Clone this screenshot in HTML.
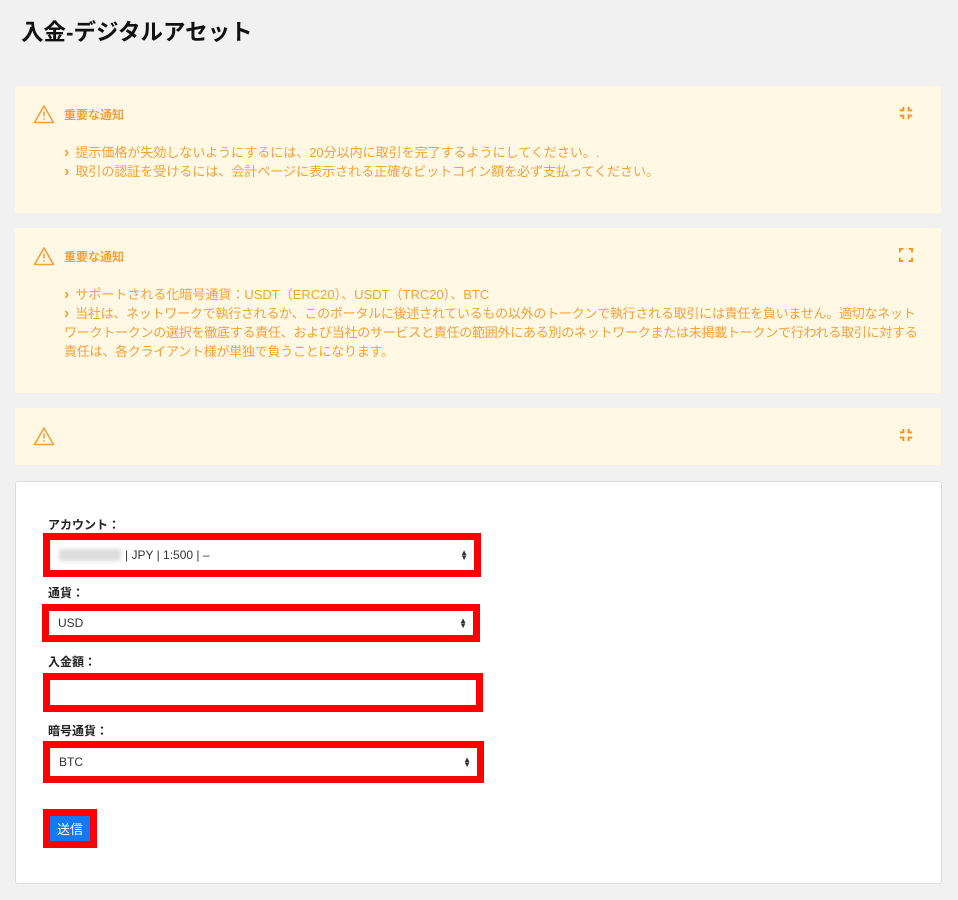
<!DOCTYPE html>
<html><head><meta charset="utf-8">
<style>
*{box-sizing:border-box;margin:0;padding:0}
body{width:958px;height:900px;background:#f1f1f1;font-family:"Liberation Sans","Noto Sans CJK JP",sans-serif;position:relative;overflow:hidden}
h1{position:absolute;left:21px;top:15px;font-size:22.5px;font-weight:bold;color:#111}
.p{position:absolute;left:15px;width:926px;background:#fef8e4;border-radius:2px}
.p .t{position:absolute;left:49px;top:20px;font-size:12px;font-weight:bold;color:#f5a03c}
.p .w{position:absolute;left:18px;top:18px}
.p .c{position:absolute;left:884px;top:20px}
.p ul{position:absolute;left:49px;top:57px;list-style:none;font-size:13px;line-height:19px;color:#f5a03c;width:900px}
.p li:before{content:"›";font-weight:bold;margin-right:6px;font-size:16px;line-height:12px}
.card{position:absolute;left:15px;top:481px;width:927px;height:403px;background:#fff;border:1px solid #ddd;border-radius:3px}
.lb{position:absolute;left:48px;font-size:12px;font-weight:bold;color:#222}
.f{position:absolute;border:7px solid #f00;background:#fff;font-size:12px;color:#333;padding-left:9px;display:flex;align-items:center}
.f .ar{position:absolute;right:6px;top:50%;transform:translateY(-50%);font-size:8px;line-height:5px;color:#333}
.btn{position:absolute;left:43px;top:809px;width:54px;height:39px;border:7px solid #f00;background:#1479f5;color:#fff;font-size:13px;display:flex;align-items:center;justify-content:center}
</style></head><body>
<h1>入金-デジタルアセット</h1>

<div class="p" style="top:86px;height:127px">
<svg class="w" width="22" height="20" viewBox="0 0 22 20"><path d="M11 2 L20.5 18.5 H1.5 Z" fill="none" stroke="#f5a03c" stroke-width="1.6" stroke-linejoin="round"/><path d="M11 7.5v5" stroke="#f5a03c" stroke-width="1.6"/><circle cx="11" cy="15" r="0.9" fill="#f5a03c"/></svg>
<div class="t">重要な通知</div>
<svg class="c" width="14" height="14" viewBox="0 0 16 16" fill="none" stroke="#f7941d" stroke-width="2.2"><path d="M5 1v4H1M11 1v4h4M5 15v-4H1M11 15v-4h4"/></svg>
<ul><li>提示価格が失効しないようにするには、20分以内に取引を完了するようにしてください。.</li><li>取引の認証を受けるには、会計ページに表示される正確なビットコイン額を必ず支払ってください。</li></ul>
</div>

<div class="p" style="top:228px;height:165px">
<svg class="w" width="22" height="20" viewBox="0 0 22 20"><path d="M11 2 L20.5 18.5 H1.5 Z" fill="none" stroke="#f5a03c" stroke-width="1.6" stroke-linejoin="round"/><path d="M11 7.5v5" stroke="#f5a03c" stroke-width="1.6"/><circle cx="11" cy="15" r="0.9" fill="#f5a03c"/></svg>
<div class="t">重要な通知</div>
<svg class="c" width="14" height="14" viewBox="0 0 16 16" fill="none" stroke="#f7941d" stroke-width="2.2"><path d="M1 5V1h4M11 1h4v4M1 11v4h4M15 11v4h-4"/></svg>
<ul><li>サポートされる化暗号通貨：USDT（ERC20）、USDT（TRC20）、BTC</li><li style="letter-spacing:-0.25px">当社は、ネットワークで執行されるか、このポータルに後述されているもの以外のトークンで執行される取引には責任を負いません。適切なネット<br>ワークトークンの選択を徹底する責任、および当社のサービスと責任の範囲外にある別のネットワークまたは未掲載トークンで行われる取引に対する<br>責任は、各クライアント様が単独で負うことになります。</li></ul>
</div>

<div class="p" style="top:408px;height:57px">
<svg class="w" width="22" height="20" viewBox="0 0 22 20"><path d="M11 2 L20.5 18.5 H1.5 Z" fill="none" stroke="#f5a03c" stroke-width="1.6" stroke-linejoin="round"/><path d="M11 7.5v5" stroke="#f5a03c" stroke-width="1.6"/><circle cx="11" cy="15" r="0.9" fill="#f5a03c"/></svg>
<svg class="c" width="14" height="14" viewBox="0 0 16 16" fill="none" stroke="#f7941d" stroke-width="2.2"><path d="M5 1v4H1M11 1v4h4M5 15v-4H1M11 15v-4h4"/></svg>
</div>

<div class="card"></div>
<div class="lb" style="top:516px">アカウント：</div>
<div class="f" style="left:43px;top:533px;width:438px;height:44px"><span style="display:inline-block;width:62px;height:12px;background:#ddd;filter:blur(2px);margin-right:4px"></span>| JPY | 1:500 | –<span class="ar">▲<br>▼</span></div>
<div class="lb" style="top:584px">通貨：</div>
<div class="f" style="left:42px;top:604px;width:438px;height:38px">USD<span class="ar">▲<br>▼</span></div>
<div class="lb" style="top:653px">入金額：</div>
<div class="f" style="left:43px;top:673px;width:440px;height:39px"></div>
<div class="lb" style="top:722px">暗号通貨：</div>
<div class="f" style="left:43px;top:741px;width:441px;height:42px">BTC<span class="ar">▲<br>▼</span></div>
<div class="btn">送信</div>
</body></html>
